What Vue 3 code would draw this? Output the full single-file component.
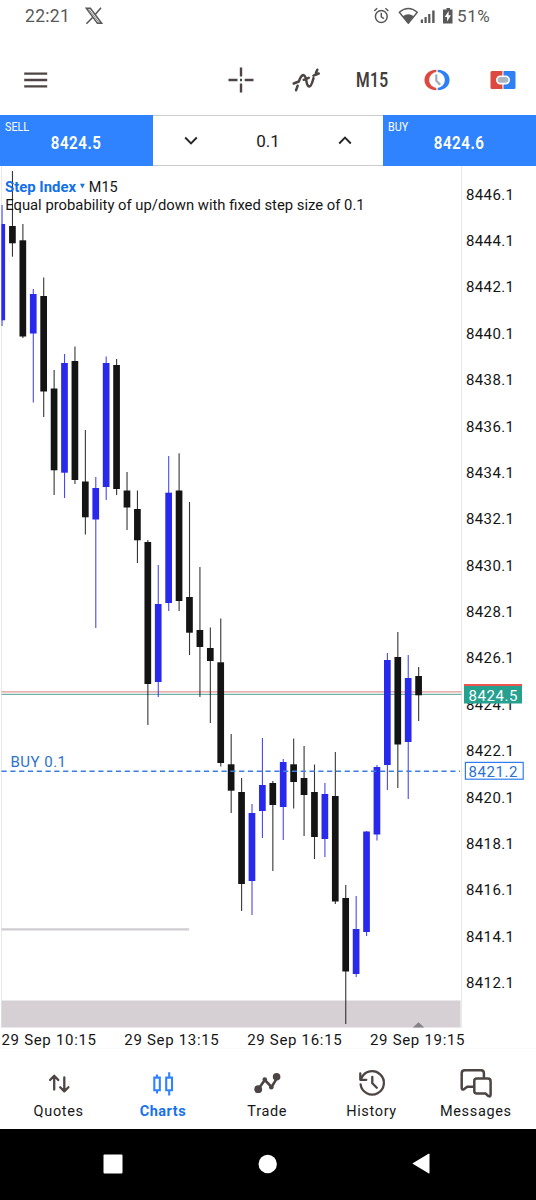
<script setup>
const raw = [
  [1, 205, 224, 320.3, 326], [0, 171, 226, 243.3, 256.7], [0, 224, 240.3, 336.5, 338],
  [1, 289, 294, 333.5, 402.5], [0, 277.5, 296, 391.5, 417], [0, 370, 388.5, 470.3, 495],
  [1, 354, 363, 472.7, 498], [0, 346.5, 361, 480, 484], [0, 430, 481.5, 517.3, 534.5],
  [1, 477, 488, 519.5, 628], [1, 356.5, 363, 487, 500], [0, 359, 365, 489, 495],
  [0, 472, 490.5, 507.5, 530], [0, 490.5, 509, 540.3, 563], [0, 540, 542, 684, 725],
  [1, 565, 604, 682, 697], [1, 456, 492.7, 603, 611], [0, 453.3, 490.5, 601, 611],
  [0, 502, 597, 632.7, 655], [0, 567, 630, 647, 697], [0, 627.5, 648, 661, 723],
  [0, 618.5, 662.3, 763, 766.5], [0, 734, 764.3, 790.7, 813], [0, 778, 792, 884, 911],
  [1, 804, 813, 881, 915], [1, 738, 785, 811, 838], [0, 781, 783, 805, 871],
  [1, 759, 762, 807, 840], [0, 738.5, 764.3, 782, 808.5], [0, 746, 778, 795, 836],
  [0, 764.5, 792, 837, 859], [1, 783, 794, 839, 857], [0, 752, 796, 901.5, 904],
  [0, 885, 898, 971.5, 1024], [1, 896, 929, 974, 977], [1, 831, 831.5, 932, 936],
  [1, 765, 767, 834.5, 840.5], [1, 653, 660, 765, 790], [0, 632, 657, 744.5, 788],
  [1, 655, 678, 742, 799], [0, 667, 676, 695.3, 721],
]
const candles = raw.map(([up, high, top, bottom, low], i) => ({
  x: 2 + i * 10.415, up, high, top, bottom, low, left: i === 0 ? 1.5 : 2 + i * 10.415 - 3.35, w: i === 0 ? 3.6 : 6.7,
}))
const prices = Array.from({ length: 18 }, (_, i) => ({
  label: (8446.1 - i * 2).toFixed(1), y: 199.6 + i * 46.38,
}))
const times = [
  { label: '29 Sep 10:15', x: 1.5 }, { label: '29 Sep 13:15', x: 124.3 },
  { label: '29 Sep 16:15', x: 247.2 }, { label: '29 Sep 19:15', x: 370 },
]
</script>

<template>
  <main class="screen">
    <header class="status">
      <span class="clock">22:21</span>
      <svg class="xlogo" width="18" height="18" viewBox="0 0 18 18" fill="none" stroke="#595959">
        <path d="M1.2 1.2h4.2l11.2 15h-4.2z" stroke-width="1.5" />
        <path d="M3.400 1.800l11 14.3" stroke-width=".7" />
        <path d="M16 .8L10 7.8M7.8 10.2L1.4 16.8" stroke-width="1.6" />
      </svg>
      <svg class="indicators" width="82" height="20" viewBox="0 0 82 20">
        <g fill="none" stroke="#595959" stroke-width="1.5">
          <circle cx="9.300" cy="10.5" r="5.9" />
          <path d="M9.300 6.8v4l2.6 1.8M2.200 5l3-2.7M16.400 5l-3-2.7" />
        </g>
        <path d="M27.300 6.2Q36.300-1.1 45.300 6.2L36.300 17.3z" fill="none" stroke="#595959" stroke-width="1.4" stroke-linejoin="round" />
        <path d="M30.800 10.300q5.500-4.200 11 0L36.300 17.3z" fill="#595959" />
        <path d="M48.800 13.500h2.200v3.500h-2.200zM52.500 11h2.200v6h-2.200zM56.200 8h2.200v9h-2.200zM60.200 4.500h2.400V17h-2.400z" fill="#595959" />
        <path d="M72.500 3.500h2V2h3.500v1.500h2.500v14h-9.500v-14z" fill="#595959" />
        <path d="M76.700 5l-4 6h2.400v4.500l3.800-6.200h-2.300z" fill="#fff" />
      </svg>
      <span class="battery">51%</span>
    </header>

    <nav class="toolbar">
      <svg class="menu" width="24" height="18" viewBox="0 0 24 18" stroke="#4d4544" stroke-width="2.4">
        <path d="M0.200 2.600h23M0.200 9h23M0.200 15.400h23" />
      </svg>
      <svg width="26" height="26" viewBox="0 0 26 26" stroke="#4d4544" stroke-width="2.400">
        <path d="M13 0.500v9M13 16.500v9M.500 13h9M16.700 13h8.800M12 13h2" />
      </svg>
      <svg class="fn" width="28" height="25" viewBox="0 0 28 25" fill="none" stroke="#4d4544" stroke-width="2.500" stroke-linecap="round">
        <path d="M1.700 15.500l5.100-2M11.700 11.800l5-2M21.500 7.700l5.200-2.200M5.600 17.800l-1.500 4.400M7 13.200C8.200 9.500 10 6.400 12 7.300c3.200 1.500 1.400 10.600 5.200 11.200 2 .3 3.200-4.400 4.300-8.400M23.800 5.200l1.500-3.500" />
      </svg>
      <span class="period"><b>M15</b></span>
      <svg class="oneclick" width="26" height="22" viewBox="0 0 26 22">
        <path d="M12.300.8C-3.500.8-3.500 21.200 12.300 21.200z" fill="#dc4a3f" />
        <path d="M13.700.8c15.800 0 15.800 20.400 0 20.400z" fill="#2f80f5" />
        <circle cx="13" cy="11" r="7.900" fill="#fff" />
        <path d="M12.300 5.500v6.200l3.900 4" fill="none" stroke="#9dadb9" stroke-width="2.200" />
      </svg>
      <svg class="panel" width="26" height="20" viewBox="0 0 26 20">
        <path d="M2 1h10.400v18H2a1.500 1.500 0 0 1-1.500-1.500v-15A1.500 1.500 0 0 1 2 1z" fill="#dc4a3f" />
        <path d="M13.500 1H24a1.500 1.500 0 0 1 1.500 1.500v15A1.500 1.500 0 0 1 24 19H13.500z" fill="#2f80f5" />
        <rect x="6.800" y="6.200" width="12.400" height="7.400" rx="3.500" fill="#aab7c1" stroke="#fff" stroke-width="1.600" />
      </svg>
    </nav>

    <section class="trade">
      <div class="quote">
        <span class="side">SELL</span><b class="price">8424.5</b>
      </div>
      <div class="volume">
        <svg width="14" height="9" viewBox="0 0 14 9"><path d="M1.200 1.500L7 7.300l5.800-5.800" /></svg>
        <span>0.1</span>
        <svg width="14" height="9" viewBox="0 0 14 9"><path d="M1.200 7.500L7 1.700l5.800 5.800" /></svg>
      </div>
      <div class="quote">
        <span class="side">BUY</span><b class="price">8424.6</b>
      </div>
    </section>

    <svg class="chart" width="536" height="883" viewBox="0 166 536 883">
      <path d="M1.500 166V1028M461.500 166V1028" stroke="#e9e9e9" />
      <path d="M0 1049H536" stroke="#f4f4f4" />
      <rect x="1.500" y="1000.500" width="459" height="27" fill="#d6d0d4" />
      <path d="M1.500 929.300H189" stroke="#d0cccf" stroke-width="2.200" />
      <path d="M412.800 1027.500l5.700-5.200 5.700 5.200z" fill="#858185" />
      <path d="M1.500 691.800H461.500" stroke="#e29793" stroke-width="1.200" />
      <path d="M1.500 694.300H461.500" stroke="#6fb2a9" stroke-width="1.200" />

      <g v-for="(c, i) in candles" :key="i" :class="c.up ? 'up' : 'down'">
        <rect class="wick" :x="c.x - 0.5" :y="c.high" width="1.100" :height="c.low - c.high" />
        <rect :x="c.left" :y="c.top" :width="c.w" :height="c.bottom - c.top" />
      </g>
      <path d="M1.500 771.200H460" stroke="#3a7fe0" stroke-width="1.500" stroke-dasharray="5.200 3.600" />

      <text x="5" y="191.500" class="symbol" textLength="71" lengthAdjust="spacingAndGlyphs">Step Index</text>
      <path d="M80 183.800h4.800l-2.400 4.800z" fill="#1a73e8" />
      <text x="88.800" y="191.500" textLength="28.800" lengthAdjust="spacingAndGlyphs">M15</text>
      <text x="5.200" y="210" class="about" textLength="359.500" lengthAdjust="spacingAndGlyphs">Equal probability of up/down with fixed step size of 0.1</text>
      <text x="10.500" y="767" class="order" textLength="55.500">BUY 0.1</text>

      <text v-for="p in prices" :key="p.label" x="466" :y="p.y" textLength="48">{{ p.label }}</text>
      <rect x="464" y="684" width="58" height="19.500" fill="#26a08f" />
      <rect x="464" y="684" width="58" height="2" fill="#ef5350" />
      <text x="468.500" y="700.700" class="tag" textLength="49">8424.5</text>
      <rect x="465.400" y="762.400" width="57.800" height="16.800" fill="#fff" stroke="#2f7cf0" stroke-width="1.200" />
      <text x="468.500" y="777" class="order" textLength="49">8421.2</text>
      <text v-for="t in times" :key="t.label" :x="t.x" y="1045" textLength="94.500">{{ t.label }}</text>
    </svg>

    <nav class="tabs">
      <a class="tab">
        <svg width="32" height="32" viewBox="0 0 32 32" stroke-width="2.300">
          <path d="M11.200 22.500V9M7.100 13l4.100-4.300 4.100 4.300M21.300 10.500V24M17.200 20.300l4.100 4.100 4.100-4.100" />
        </svg>
        <span>Quotes</span>
      </a>
      <a class="tab active">
        <svg width="32" height="32" viewBox="0 0 32 32" stroke-width="2.100">
          <path d="M7.300 10.600h5.500v12.600H7.300zM19.200 10.600h5.800v12.600h-5.800zM10 7.500v3M10 23.500v3M22.200 5.200v5M22.200 23.500v5" stroke-linecap="butt" stroke-linejoin="miter" />
        </svg>
        <span>Charts</span>
      </a>
      <a class="tab">
        <svg width="32" height="32" viewBox="0 0 32 32" stroke-width="2.600">
          <path d="M7.200 22.200l6.600-9.200 6.800 7 5.800-9.600" />
          <g fill="#4d4544" stroke="none"><circle cx="7.200" cy="22.200" r="3.900" /><circle cx="25.600" cy="9.700" r="3.800" /><circle cx="13.800" cy="12.600" r="2.300" /><circle cx="20.300" cy="20.300" r="2.300" /></g>
        </svg>
        <span>Trade</span>
      </a>
      <a class="tab">
        <svg width="32" height="32" viewBox="0 0 32 32" stroke-width="2.300">
          <path d="M4.600 17.400A11.700 11.700 0 1 0 5.400 11.400M4.300 6.500v6.300h6M16.300 9.800v6.500l4.500 4.500" />
        </svg>
        <span>History</span>
      </a>
      <a class="tab">
        <svg width="32" height="32" viewBox="0 0 32 32" stroke-width="2.500">
          <path d="M13 19.800H7.200L3.900 22.300Q1.700 23 1.700 21V6.300Q1.700 3.200 4.700 3.200h16.200q3 0 3 3v4M16.800 11.600h11q2.800 0 2.800 2.800v13.400q0 2.200-2 1.400L25.500 26.500h-8.700q-2.500 0-2.500-2.500v-9.900q0-2.500 2.500-2.500z" />
        </svg>
        <span>Messages</span>
      </a>
    </nav>

    <footer class="system">
      <svg width="20" height="20" viewBox="0 0 20 20"><rect x=".5" y=".5" width="19" height="19" rx="1" /></svg>
      <svg width="20" height="20" viewBox="0 0 20 20"><circle cx="10.700" cy="10" r="9.200" /></svg>
      <svg width="20" height="22" viewBox="0 0 20 22"><path d="M1.300 10.600L17.500.800q1-.5 1 .5v18.500q0 1-1 .5z" /></svg>
    </footer>
  </main>
</template>

<style>
body { margin: 0; background: #fff; }
</style>

<style scoped>
.screen { width: 536px; height: 1200px; display: flex; flex-direction: column; background: #fff; font-family: Roboto, "Noto Sans", sans-serif; overflow: hidden; }
.status { height: 45px; box-sizing: border-box; padding: 0 40px 17px 25px; display: flex; align-items: center; flex: none; color: #595959; }
.clock { font-size: 17.500px; letter-spacing: .3px; width: 60px; padding-top: 4px; }
.xlogo { margin-top: 3px; }
.indicators { margin-left: 269px; flex: none; margin-top: 3px; }
.battery { font-size: 17px; letter-spacing: .6px; padding: 4px 0 0 3px; white-space: nowrap; }
.toolbar { height: 70px; flex: none; display: flex; align-items: center; padding-left: 24px; }
.toolbar svg { flex: none; }
.menu { margin-right: 180px; }
.fn { margin-left: 38px; }
.period { width: 34px; margin-left: 36px; color: #433d3c; font-size: 19.500px; }
.period b { display: inline-block; font-weight: 600; transform: scaleX(.8); transform-origin: left; letter-spacing: .5px; }
.oneclick { margin-left: 34px; }
.panel { margin-left: 40px; }
.trade { height: 51px; flex: none; display: grid; grid-template-columns: 153px 230px 153px; }
.quote { background: #3083ff; color: #fff; position: relative; text-align: center; }
.side { position: absolute; left: 5px; top: 4px; font-size: 13px; line-height: 16px; transform: scaleX(.83); transform-origin: left; }
.price { display: inline-block; font-size: 18px; line-height: 22px; font-weight: 600; margin-top: 17px; transform: scaleX(.84); letter-spacing: .6px; }
.volume { display: flex; align-items: center; justify-content: space-between; padding: 0 31px; border-top: 1.500px solid #ccc; border-bottom: 1.500px solid #ccc; box-sizing: border-box; font-size: 17px; color: #202020; }
.volume path { fill: none; stroke: #252525; stroke-width: 1.900; }
.chart { display: block; flex: none; }
.chart text { font-size: 15px; fill: #151515; }
.chart .symbol { font-weight: 700; fill: #1270e8; }
.chart .about { font-size: 14.500px; }
.chart .order { fill: #2b72cf; }
.chart .tag { fill: #fff; }
.up { fill: #2929ee; }
.down { fill: #141414; }
.wick { opacity: .85; }
.tabs { flex: none; height: 80px; display: grid; grid-template-columns: repeat(5, 104.300px); padding-left: 6.500px; box-sizing: border-box; }
.tab { display: flex; flex-direction: column; align-items: center; padding-top: 18px; box-sizing: border-box; color: #171717; font-size: 14.500px; letter-spacing: .65px; }
.tab svg { fill: none; stroke: #4d4544; stroke-linecap: round; stroke-linejoin: round; }
.tab span { line-height: 18px; margin-top: 4px; }
.active { color: #1772ee; font-weight: 700; letter-spacing: .5px; }
.active svg { stroke: #3083ff; }
.system { flex: 1; background: #000; display: flex; align-items: center; padding: 0 105px 2px 103px; justify-content: space-between; }
.system svg { fill: #fff; }
</style>
